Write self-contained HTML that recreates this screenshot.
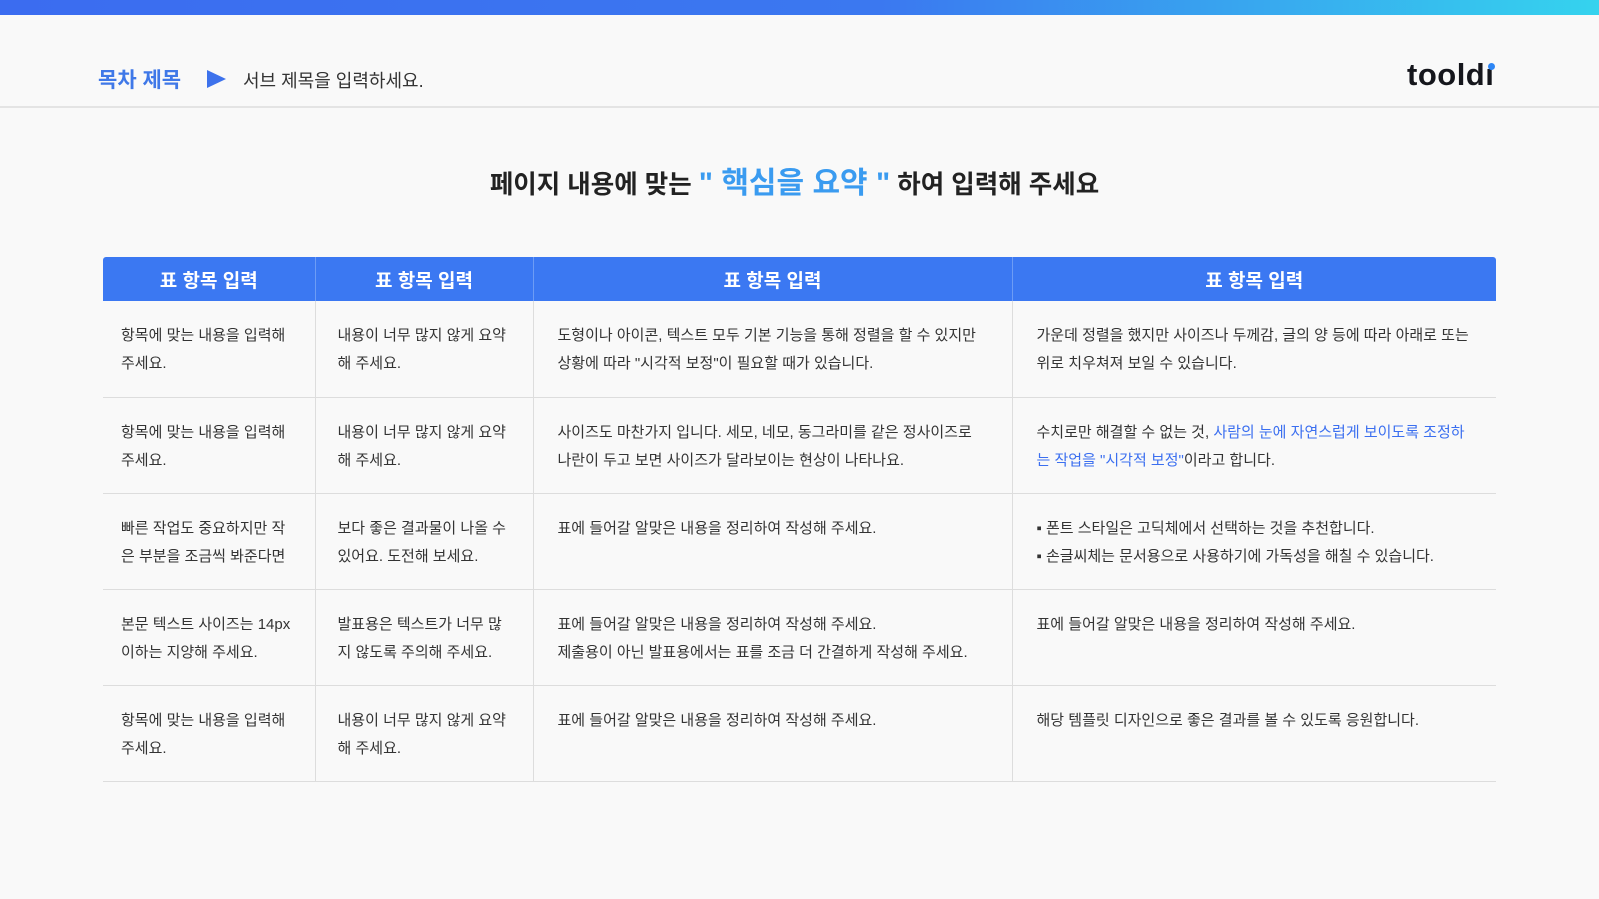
<!DOCTYPE html>
<html><head><meta charset="utf-8"><style>
*{margin:0;padding:0;box-sizing:border-box}
body{width:1599px;height:899px;background:#f9f9f9;font-family:"Liberation Sans","Noto Sans CJK KR",sans-serif;position:relative;overflow:hidden;color:#333}
.bar{position:absolute;left:0;top:0;width:1599px;height:15px;background:linear-gradient(90deg,#3b6cf0 0%,#3b78f0 55%,#35d3ee 100%)}
.hd{position:absolute;left:0;top:106px;width:1599px;height:2px;background:#e4e4e4}
.t1{position:absolute;left:98px;top:64px;font-size:21px;font-weight:bold;color:#3f78e8}
.arr{position:absolute;left:207px;top:70px;width:0;height:0;border-left:19px solid #3d72ec;border-top:9px solid transparent;border-bottom:9px solid transparent}
.t2{position:absolute;left:243px;top:67px;font-size:18px;color:#333}
.logo{position:absolute;left:1407px;top:57px;font-size:31px;font-weight:bold;color:#15161c;letter-spacing:0.5px}
.dot{position:absolute;left:1488px;top:63px;width:7px;height:7px;border-radius:50%;background:#2e86f5}
h1{position:absolute;left:0;width:1599px;top:158px;text-align:center;font-size:25.5px;font-weight:bold;color:#222;padding-right:10px}
h1 span{color:#3a9bf0;font-size:30px}
table{position:absolute;left:103px;top:257px;width:1393px;border-collapse:collapse;font-size:15px}
th{background:#3b78f2;color:#fff;font-size:19px;height:44px;font-weight:bold;border-left:1px solid #6d9cf5}
th:first-child{border-left:none;border-radius:3px 0 0 0}
th:last-child{border-radius:0 3px 0 0}
td{height:96px;vertical-align:top;padding:21px 24px 0 18px;line-height:28px;border-bottom:1px solid #ddd;border-left:1px solid #ddd;color:#333;word-break:break-all}
td+td{padding-left:22px}
td:nth-child(n+3){padding-left:24px}
td:first-child{border-left:none}
.b{color:#3b6ff0}
</style></head><body>
<div class="bar"></div>
<div class="t1">목차 제목</div><div class="arr"></div><div class="t2">서브 제목을 입력하세요.</div>
<div class="logo">toold&#305;</div><div class="dot"></div>
<div class="hd"></div>
<h1>페이지 내용에 맞는 <span>" 핵심을 요약 "</span> 하여 입력해 주세요</h1>
<table>
<colgroup><col style="width:212px"><col style="width:218px"><col style="width:479px"><col style="width:484px"></colgroup>
<tr><th>표 항목 입력</th><th>표 항목 입력</th><th>표 항목 입력</th><th>표 항목 입력</th></tr>
<tr><td>항목에 맞는 내용을 입력해 주세요.</td><td>내용이 너무 많지 않게 요약해 주세요.</td><td>도형이나 아이콘, 텍스트 모두 기본 기능을 통해 정렬을 할 수 있지만 상황에 따라 "시각적 보정"이 필요할 때가 있습니다.</td><td>가운데 정렬을 했지만 사이즈나 두께감, 글의 양 등에 따라 아래로 또는 위로 치우쳐져 보일 수 있습니다.</td></tr>
<tr><td>항목에 맞는 내용을 입력해 주세요.</td><td>내용이 너무 많지 않게 요약해 주세요.</td><td>사이즈도 마찬가지 입니다. 세모, 네모, 동그라미를 같은 정사이즈로 나란이 두고 보면 사이즈가 달라보이는 현상이 나타나요.</td><td>수치로만 해결할 수 없는 것, <span class="b">사람의 눈에 자연스럽게 보이도록 조정하는 작업을 "시각적 보정"</span>이라고 합니다.</td></tr>
<tr><td>빠른 작업도 중요하지만 작은 부분을 조금씩 봐준다면</td><td>보다 좋은 결과물이 나올 수 있어요. 도전해 보세요.</td><td>표에 들어갈 알맞은 내용을 정리하여 작성해 주세요.</td><td>▪ 폰트 스타일은 고딕체에서 선택하는 것을 추천합니다.<br>▪ 손글씨체는 문서용으로 사용하기에 가독성을 해칠 수 있습니다.</td></tr>
<tr><td>본문 텍스트 사이즈는 14px 이하는 지양해 주세요.</td><td>발표용은 텍스트가 너무 많지 않도록 주의해 주세요.</td><td>표에 들어갈 알맞은 내용을 정리하여 작성해 주세요.<br>제출용이 아닌 발표용에서는 표를 조금 더 간결하게 작성해 주세요.</td><td>표에 들어갈 알맞은 내용을 정리하여 작성해 주세요.</td></tr>
<tr><td>항목에 맞는 내용을 입력해 주세요.</td><td>내용이 너무 많지 않게 요약해 주세요.</td><td>표에 들어갈 알맞은 내용을 정리하여 작성해 주세요.</td><td>해당 템플릿 디자인으로 좋은 결과를 볼 수 있도록 응원합니다.</td></tr>
</table>
</body></html>
